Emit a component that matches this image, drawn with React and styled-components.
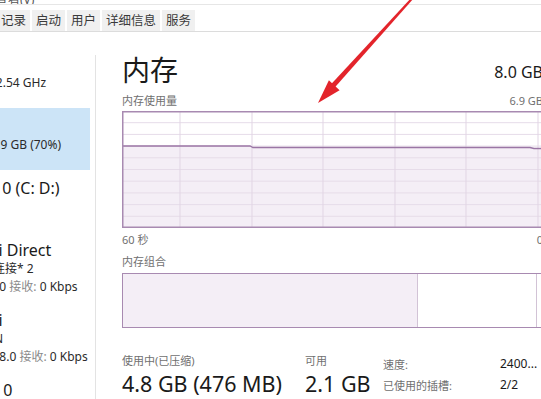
import React from 'react';
import styled, { createGlobalStyle } from 'styled-components';

const tabs = ['记录', '启动', '用户', '详细信息', '服务'];

const devices = [
  { title: 'CPU', subs: [[{ t: '19% 2.54 GHz' }]] },
  { title: '内存', subs: [[{ t: '5.6/7.9 GB (70%)' }]], selected: true },
  { title: '磁盘 0 (C: D:)', subs: [[{ t: '1%' }]] },
  {
    title: 'Wi-Fi Direct',
    subs: [
      [{ t: '本地连接* 2' }],
      [{ t: '发送:', muted: true }, { t: ' 0 ' }, { t: '接收:', muted: true }, { t: ' 0 Kbps' }],
    ],
  },
  {
    title: 'Wi-Fi',
    subs: [
      [{ t: 'WLAN' }],
      [{ t: '发送:', muted: true }, { t: ' 8.0 ' }, { t: '接收:', muted: true }, { t: ' 0 Kbps' }],
    ],
  },
  { title: 'GPU 0', subs: [[{ t: '0%' }]] },
];

const specs = [
  ['速度:', '2400...'],
  ['已使用的插槽:', '2/2'],
  ['外形规格:', 'SODIMM'],
];

const CHART_W = 421;
const CHART_H = 117;
const usageLine = 'M0 35 H128 L131 36.5 H408 L412 37.5 H421';

function UsageChart() {
  const rows = [1, 2, 3, 4, 5, 6, 7, 8, 9].map((k) => k * (CHART_H / 10));
  const cols = [58, 130, 201, 273, 344, 416];
  return (
    <svg width={CHART_W} height={CHART_H} style={{ display: 'block' }}>
      <path d={`${usageLine} V${CHART_H} H0 Z`} fill="#f4eef6" />
      {rows.map((y) => (
        <line key={y} x1="0" x2={CHART_W} y1={y} y2={y} stroke="#e6dce9" strokeWidth="1" />
      ))}
      {cols.map((x) => (
        <line key={x} x1={x} x2={x} y1="0" y2={CHART_H} stroke="#e1d5e4" strokeWidth="1" />
      ))}
      <path d={usageLine} fill="none" stroke="#9a76a5" strokeWidth="1.3" />
      <rect x="0.75" y="0.75" width={CHART_W - 1.5} height={CHART_H - 1.5} fill="none" stroke="#a88ab1" strokeWidth="1.5" />
    </svg>
  );
}

function App() {
  return (
    <>
      <GlobalStyle />
      <Window>
        <MenuBar>
          <MenuText>查看(V)</MenuText>
        </MenuBar>
        <TabBar>
          {tabs.map((tab, i) => (
            <Tab key={tab} $first={i === 0}>
              {tab}
            </Tab>
          ))}
        </TabBar>
        <Body>
          <Sidebar>
            {devices.map((d) => (
              <Device key={d.title} $selected={d.selected}>
                <DeviceTitle>{d.title}</DeviceTitle>
                {d.subs.map((parts, i) => (
                  <DeviceSub key={i}>
                    {parts.map((p, j) =>
                      p.muted ? <Muted key={j}>{p.t}</Muted> : <span key={j}>{p.t}</span>
                    )}
                  </DeviceSub>
                ))}
              </Device>
            ))}
          </Sidebar>
          <Divider />
          <Main>
            <HeaderRow>
              <Title>内存</Title>
              <Capacity>8.0 GB</Capacity>
            </HeaderRow>
            <CaptionRow>
              <span>内存使用量</span>
              <span>6.9 GB</span>
            </CaptionRow>
            <ChartBox>
              <UsageChart />
            </ChartBox>
            <CaptionRow $top={5}>
              <span>60 秒</span>
              <span>0</span>
            </CaptionRow>
            <CaptionRow $top={5}>
              <span>内存组合</span>
            </CaptionRow>
            <CompositionBar>
              <Segment $width="294px" $fill />
              <Segment $width="auto" $grow />
              <Segment $width="5px" $last />
            </CompositionBar>
            <Stats>
              <StatBlock $width={183}>
                <StatLabel>使用中(已压缩)</StatLabel>
                <StatValue>4.8 GB (476 MB)</StatValue>
              </StatBlock>
              <StatBlock $width={78}>
                <StatLabel>可用</StatLabel>
                <StatValue>2.1 GB</StatValue>
              </StatBlock>
              <SpecTable>
                {specs.map(([k, v]) => (
                  <React.Fragment key={k}>
                    <SpecKey>{k}</SpecKey>
                    <SpecValue>{v}</SpecValue>
                  </React.Fragment>
                ))}
              </SpecTable>
            </Stats>
          </Main>
        </Body>
        <Arrow width="541" height="399" viewBox="0 0 541 399">
          <polygon points="414,-2 412,-3 328.5,87.1 332.1,90.5" fill="#e3242b" />
          <polygon points="318,103 339.6,90.2 328.9,80.2" fill="#e3242b" />
        </Arrow>
      </Window>
    </>
  );
}

export default App;

const GlobalStyle = createGlobalStyle`
  html, body {
    margin: 0;
    padding: 0;
    background: #ffffff;
    overflow: hidden;
  }
  body {
    font-family: "Noto Sans", "Noto Sans CJK SC", sans-serif;
    color: #1f1f1f;
  }
`;

const Window = styled.div`
  position: relative;
  width: 541px;
  height: 399px;
  overflow: hidden;
  display: flex;
  flex-direction: column;
`;

const MenuBar = styled.div`
  height: 4px;
  flex-shrink: 0;
  overflow: hidden;
  display: flex;
  flex-direction: column;
  justify-content: flex-end;
  border-bottom: 1px solid #e6e6e6;
`;

const MenuText = styled.div`
  flex-shrink: 0;
  font-size: 12px;
  line-height: 14px;
  margin-bottom: -3px;
  margin-left: -4px;
  color: #555;
`;

const TabBar = styled.div`
  display: flex;
  flex-shrink: 0;
  gap: 2px;
  padding-top: 5px;
  border-bottom: 1px solid #dcdcdc;
`;

const Tab = styled.div`
  height: 21px;
  line-height: 21px;
  padding: 0 4px 0 ${(p) => (p.$first ? '1px' : '4px')};
  background: #f0f0f0;
  font-size: 12.5px;
  color: #3a3a3a;
`;

const Body = styled.div`
  flex: 1;
  display: flex;
  min-height: 0;
`;

const Sidebar = styled.div`
  width: 90px;
  padding: 14px 5px 0 0;
  flex-shrink: 0;
  overflow: hidden;
`;

const Device = styled.div`
  margin-left: -31px;
  min-height: 62px;
  box-sizing: border-box;
  padding: 8px 0 6px 0;
  white-space: nowrap;
  background: ${(p) => (p.$selected ? '#cce4f7' : 'transparent')};
`;

const DeviceTitle = styled.div`
  margin-left: -3px;
  font-size: 16px;
  line-height: 20px;
  color: #1a1a1a;
`;

const DeviceSub = styled.div`
  font-size: 12px;
  line-height: 18px;
  color: #2a2a2a;
`;

const Muted = styled.span`
  color: #8a8a8a;
`;

const Divider = styled.div`
  width: 1px;
  margin-top: 23px;
  background: #e3e3e3;
  flex-shrink: 0;
`;

const Main = styled.div`
  width: 421px;
  flex-shrink: 0;
  padding: 20px 0 0 26px;
  display: flex;
  flex-direction: column;
  & > * {
    flex-shrink: 0;
  }
`;

const HeaderRow = styled.div`
  display: flex;
  justify-content: space-between;
  align-items: flex-start;
  white-space: nowrap;
`;

const Title = styled.div`
  font-size: 28px;
  line-height: 36px;
  color: #1a1a1a;
`;

const Capacity = styled.div`
  font-size: 16px;
  line-height: 20px;
  color: #1a1a1a;
  margin-top: 10px;
`;

const CaptionRow = styled.div`
  display: flex;
  justify-content: space-between;
  margin-top: ${(p) => (p.$top !== undefined ? p.$top : 6)}px;
  margin-bottom: 3px;
  font-size: 11px;
  line-height: 14px;
  color: #707070;
  white-space: nowrap;
`;

const ChartBox = styled.div`
  width: ${CHART_W}px;
  height: ${CHART_H}px;
`;

const CompositionBar = styled.div`
  display: flex;
  height: 55px;
  margin-top: 1px;
  box-sizing: border-box;
  border: 1.5px solid #a88ab1;
`;

const Segment = styled.div`
  width: ${(p) => p.$width};
  flex: ${(p) => (p.$grow ? 1 : 'none')};
  background: ${(p) => (p.$fill ? '#f4eef6' : '#ffffff')};
  border-right: ${(p) => (p.$last ? 'none' : '1px solid #d2c3d6')};
`;

const Stats = styled.div`
  display: flex;
  margin-top: 25px;
  white-space: nowrap;
`;

const StatBlock = styled.div`
  width: ${(p) => p.$width}px;
  flex-shrink: 0;
  display: flex;
  flex-direction: column;
  gap: 3px;
`;

const StatLabel = styled.div`
  font-size: 11px;
  line-height: 16px;
  color: #707070;
`;

const StatValue = styled.div`
  font-size: 21.5px;
  line-height: 24px;
  color: #1a1a1a;
`;

const SpecTable = styled.div`
  display: grid;
  grid-template-columns: 117px auto;
  grid-auto-rows: 21px;
  align-items: center;
`;

const SpecKey = styled.div`
  font-size: 11px;
  color: #707070;
`;

const SpecValue = styled.div`
  font-size: 12px;
  color: #1a1a1a;
`;

const Arrow = styled.svg`
  position: absolute;
  top: 0;
  left: 0;
  pointer-events: none;
`;
